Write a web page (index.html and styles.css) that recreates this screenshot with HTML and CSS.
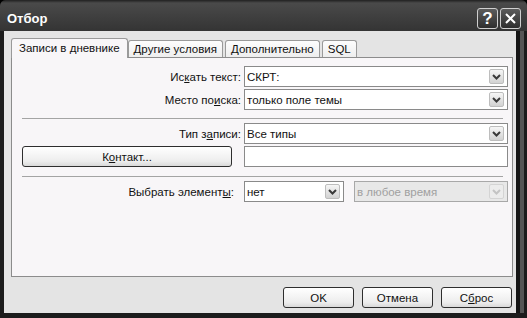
FILE: index.html
```html
<!DOCTYPE html>
<html lang="ru">

<head>
  <meta charset="UTF-8" />
  <title>Отбор</title>
  <link rel="stylesheet" href="styles.css">
</head>

<body>
  <div class="window">
    <!-- Заголовок окна -->
    <div class="titlebar">
      <span class="title">Отбор</span>
      <div class="capButtons">
        <span class="capBtn">?</span>
        <span class="capBtn">
          <svg width="13" height="13" viewBox="0 0 13 13">
            <path d="M2 2 L11 11 M11 2 L2 11" stroke="#fff" stroke-width="2" fill="none" />
          </svg>
        </span>
      </div>
    </div>

    <div class="client">
      <!-- Вкладки -->
      <div class="tabs">
        <div class="tab active">Записи в дневнике</div>
        <div class="tab">Другие условия</div>
        <div class="tab">Дополнительно</div>
        <div class="tab">SQL</div>
      </div>

      <div class="panel">
        <div class="row">
          <label class="label">Ис<u>к</u>ать текст:</label>
          <div class="combo wide"><span class="value">СКРТ:</span><span class="drop"><svg width="9" height="6" viewBox="0 0 9 6"><path d="M1 1 L4.5 4.5 L8 1" stroke="#3a3a3a" stroke-width="2" fill="none" /></svg></span></div>
        </div>
        <div class="row row2">
          <label class="label">Место по<u>и</u>ска:</label>
          <div class="combo wide"><span class="value">только поле темы</span><span class="drop"><svg width="9" height="6" viewBox="0 0 9 6"><path d="M1 1 L4.5 4.5 L8 1" stroke="#3a3a3a" stroke-width="2" fill="none" /></svg></span></div>
        </div>

        <hr class="sep">

        <div class="row">
          <label class="label">Тип з<u>а</u>писи:</label>
          <div class="combo wide"><span class="value">Все типы</span><span class="drop"><svg width="9" height="6" viewBox="0 0 9 6"><path d="M1 1 L4.5 4.5 L8 1" stroke="#3a3a3a" stroke-width="2" fill="none" /></svg></span></div>
        </div>
        <div class="row row2">
          <button class="btn contact">К<u>о</u>нтакт...</button>
          <div class="combo wide"></div>
        </div>

        <hr class="sep sep2">

        <div class="row">
          <label class="label short">Выбрать элемент<u>ы</u>:</label>
          <div class="combo small"><span class="value">нет</span><span class="drop"><svg width="9" height="6" viewBox="0 0 9 6"><path d="M1 1 L4.5 4.5 L8 1" stroke="#3a3a3a" stroke-width="2" fill="none" /></svg></span></div>
          <div class="combo disabled"><span class="value">в любое время</span><span class="drop"><svg width="9" height="6" viewBox="0 0 9 6"><path d="M1 1 L4.5 4.5 L8 1" stroke="#c4c4c4" stroke-width="2" fill="none" /></svg></span></div>
        </div>
      </div>

      <!-- Кнопки диалога -->
      <div class="buttons">
        <button class="btn">OK</button>
        <button class="btn">Отмена</button>
        <button class="btn">С<u>б</u>рос</button>
      </div>
    </div>
  </div>
</body>

</html>
```

FILE: styles.css
```css
body {
  margin: 0;
  background: #000;
  font-family: "Liberation Sans", Arial, sans-serif;
  font-size: 11.5px;
  color: #111;
}

.window {
  width: 527px;
  height: 318px;
  display: flex;
  flex-direction: column;
  background: #1c1c1c;
  border-radius: 6px 6px 0 0;
  overflow: hidden;
}

.titlebar {
  height: 31px;
  flex: none;
  display: flex;
  align-items: center;
  padding: 6px 6px 0 7px;
  box-sizing: border-box;
  background: linear-gradient(#202020 0, #4a4a4a 3px, #404040 50%, #343434 100%);
}

.title {
  flex: 1;
  color: #fff;
  font-weight: bold;
  font-size: 13px;
}

.capButtons {
  display: flex;
  gap: 2px;
}

.capBtn {
  width: 19px;
  height: 19px;
  display: flex;
  align-items: center;
  justify-content: center;
  border: 1px solid #cfcfcf;
  border-radius: 3px;
  background: linear-gradient(#5c5c5c, #2e2e2e);
  color: #fff;
  font-size: 17px;
  font-weight: bold;
}

.client {
  flex: 1;
  display: flex;
  flex-direction: column;
  margin: 0 11px 5px 4px;
  padding: 7px 3px 0 7px;
  background: #e4e4e4;
  box-shadow: 4px 0 0 #151515, 8px 0 0 #555;
}

.tabs {
  display: flex;
  height: 20px;
  margin-bottom: -1px;
  position: relative;
  z-index: 1;
}

.tab {
  height: 16px;
  margin-top: 2px;
  margin-right: 2px;
  padding: 0 5px;
  line-height: 16px;
  border: 1px solid #9a9a9a;
  border-bottom: none;
  border-radius: 3px 3px 0 0;
  background: linear-gradient(#fdfdfd, #eeeeee);
  white-space: nowrap;
}

.tab.active {
  height: 19px;
  margin-top: 0;
  margin-right: 0;
  padding: 0 7px;
  line-height: 19px;
  background: #f8f6f8;
}

.panel {
  height: 220px;
  box-sizing: border-box;
  padding: 8px 4px 0 10px;
  border: 1px solid #8c8c8c;
  background: #f8f6f8;
}

.row {
  display: flex;
  align-items: center;
  height: 21px;
}

.row2 {
  margin-top: 2px;
}

.label {
  width: 219px;
  margin-right: 3px;
  text-align: right;
  white-space: nowrap;
}

.label.short {
  width: 212px;
  margin-right: 10px;
}

.sep {
  margin: 8px 5px 4px 0;
  border: none;
  border-top: 1px solid #a4a4a4;
  height: 0;
}

.sep2 {
  margin-top: 9px;
}

.combo {
  height: 21px;
  box-sizing: border-box;
  display: flex;
  align-items: center;
  padding: 0 3px 0 2px;
  border: 1px solid #8a8a8a;
  background: #fff;
}

.combo.wide {
  width: 264px;
}

.combo.small {
  width: 100px;
  margin-right: 10px;
}

.combo.disabled {
  width: 154px;
  background: #e8e8e8;
  border-color: #a8a8a8;
  color: #a0a0a0;
}

.value {
  flex: 1;
  white-space: nowrap;
}

.drop {
  width: 13px;
  height: 13px;
  display: flex;
  align-items: center;
  justify-content: center;
  border: 1px solid #bdbdbd;
  border-radius: 2px;
  background: linear-gradient(#f6f6f6, #d2d2d2);
}

.disabled .drop {
  background: #ececec;
  border-color: #d4d4d4;
}

.btn {
  height: 21px;
  padding: 0;
  border: 1px solid #2e2e2e;
  border-radius: 3px;
  background: linear-gradient(#ffffff, #ededed 75%, #d9d9d9);
  font-family: "Liberation Sans", Arial, sans-serif;
  font-size: 11.5px;
  color: #111;
}

.btn.contact {
  width: 210px;
  margin-right: 12px;
}

.buttons {
  display: flex;
  justify-content: flex-end;
  gap: 8px;
  margin-top: 10px;
  padding-right: 1px;
}

.buttons .btn {
  width: 71px;
}
```
